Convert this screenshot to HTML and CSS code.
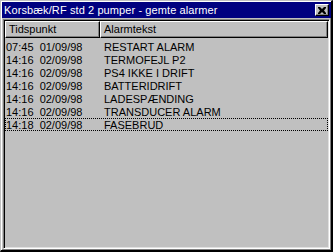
FILE: index.html
```html
<!DOCTYPE html>
<html lang="da">
<head>
    <meta charset="UTF-8">
    <title>Korsbæk/RF std 2 pumper - gemte alarmer</title>
    <link rel="stylesheet" href="styles.css">
</head>
<body>

<div class="window">
    <div class="titlebar">
        <span class="title">Korsbæk/RF std 2 pumper - gemte alarmer</span>
        <button class="close-button" title="Luk">
            <svg width="8" height="7" viewBox="0 0 8 7">
                <path d="M0 0h2l2 2 2-2h2v1L6 3.5 8 6v1H6L4 5 2 7H0V6l2-2.5L0 1z" fill="#000"/>
            </svg>
        </button>
    </div>

    <div class="alarm-list">
        <div class="list-header">
            <div class="col-head col-time">Tidspunkt</div>
            <div class="col-head col-text">Alarmtekst</div>
        </div>
        <div class="rows">
            <div class="row"><span class="cell-time">07:45&nbsp;&nbsp;01/09/98</span><span>RESTART ALARM</span></div>
            <div class="row"><span class="cell-time">14:16&nbsp;&nbsp;02/09/98</span><span>TERMOFEJL P2</span></div>
            <div class="row"><span class="cell-time">14:16&nbsp;&nbsp;02/09/98</span><span>PS4 IKKE I DRIFT</span></div>
            <div class="row"><span class="cell-time">14:16&nbsp;&nbsp;02/09/98</span><span>BATTERIDRIFT</span></div>
            <div class="row"><span class="cell-time">14:16&nbsp;&nbsp;02/09/98</span><span>LADESPÆNDING</span></div>
            <div class="row"><span class="cell-time">14:16&nbsp;&nbsp;02/09/98</span><span>TRANSDUCER ALARM</span></div>
            <div class="row focused"><span class="cell-time">14:18&nbsp;&nbsp;02/09/98</span><span>FASEBRUD</span></div>
        </div>
    </div>
</div>

</body>
</html>
```

FILE: styles.css
```css
/* Window frame */
body {
    margin: 0;
    background-color: #c0c0c0;
    font-family: "Liberation Sans", Arial, sans-serif;
    font-size: 11px;
    color: #000;
}

.window {
    width: 333px;
    height: 252px;
    box-sizing: border-box;
    display: flex;
    flex-direction: column;
    gap: 1px;
    background: #c0c0c0;
    border-style: solid;
    border-width: 1px 2px 2px 1px;
    border-color: #c0c0c0 #000 #000 #c0c0c0;
    box-shadow: inset 1px 1px #fff, inset -1px -1px #808080;
    padding: 1px 0 1px 1px;
}

/* Title bar */
.titlebar {
    height: 16px;
    flex-shrink: 0;
    display: flex;
    align-items: center;
    justify-content: space-between;
    background: #000080;
    color: #fff;
    padding: 0 2px 0 2px;
}

.title {
    white-space: nowrap;
    line-height: 16px;
    letter-spacing: 0.1px;
}

.close-button {
    width: 14px;
    height: 12px;
    padding: 0;
    display: flex;
    align-items: center;
    justify-content: center;
    background: #c0c0c0;
    border-style: solid;
    border-width: 1px;
    border-color: #fff #000 #000 #fff;
    box-shadow: inset -1px -1px #808080;
}

/* List with header */
.alarm-list {
    flex: 1;
    margin: 0 1px;
    padding: 1px;
    border: 1px solid;
    border-color: #808080 #fff #fff #808080;
    box-shadow: inset 1px 1px #000, inset -1px -1px #dfdfdf;
}

.list-header {
    display: flex;
    height: 17px;
}

.col-head {
    box-sizing: border-box;
    height: 17px;
    line-height: 14px;
    padding-left: 3px;
    border-style: solid;
    border-width: 1px;
    border-color: #fff #000 #000 #fff;
    box-shadow: inset -1px -1px #808080;
}

.col-time {
    width: 95px;
}

.col-text {
    flex: 1;
}

.rows {
    padding-top: 2px;
}

.row {
    display: flex;
    height: 13px;
    line-height: 12px;
    box-sizing: border-box;
    border: 1px solid transparent;
    white-space: nowrap;
}

.row.focused {
    border: 1px dotted #000;
}

.cell-time {
    width: 98px;
    flex-shrink: 0;
}
```
